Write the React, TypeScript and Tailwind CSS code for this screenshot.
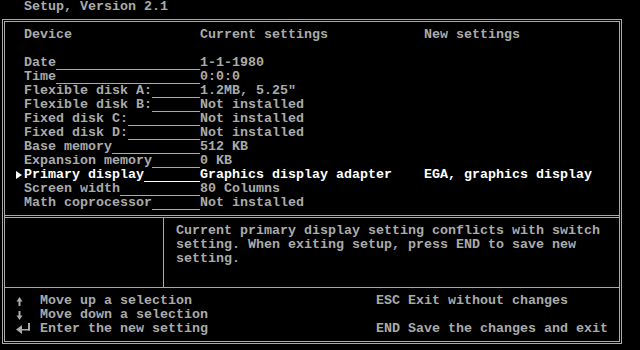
const devices = [
  { name: "Date", current: "1-1-1980" },
  { name: "Time", current: "0:0:0" },
  { name: "Flexible disk A:", current: '1.2MB, 5.25"' },
  { name: "Flexible disk B:", current: "Not installed" },
  { name: "Fixed disk C:", current: "Not installed" },
  { name: "Fixed disk D:", current: "Not installed" },
  { name: "Base memory", current: "512 KB" },
  { name: "Expansion memory", current: "0 KB" },
  { name: "Primary display", current: "Graphics display adapter", next: "EGA, graphics display", selected: true },
  { name: "Screen width", current: "80 Columns" },
  { name: "Math coprocessor", current: "Not installed" },
];

function UpArrow() {
  return (
    <svg width="8" height="14" viewBox="0 0 8 14" className="block">
      <polygon points="0.5,7.5 3.5,3 6.5,7.5" fill="#aaaaaa" />
      <rect x="2.5" y="6" width="2" height="6" fill="#aaaaaa" />
    </svg>
  );
}

function DownArrow() {
  return (
    <svg width="8" height="14" viewBox="0 0 8 14" className="block">
      <rect x="2.5" y="3" width="2" height="6" fill="#aaaaaa" />
      <polygon points="0.5,7.5 3.5,12 6.5,7.5" fill="#aaaaaa" />
    </svg>
  );
}

function EnterArrow() {
  return (
    <svg width="16" height="14" viewBox="0 0 16 14" className="block">
      <polygon points="0,7.5 6,3 6,12" fill="#aaaaaa" />
      <rect x="5" y="7" width="9" height="1.5" fill="#aaaaaa" />
      <rect x="12" y="1" width="2" height="7.5" fill="#aaaaaa" />
    </svg>
  );
}

function App() {
  return (
    <div className="w-[640px] h-[350px] bg-black text-[#aaaaaa] font-['Liberation_Mono','DejaVu_Sans_Mono',monospace] font-bold text-[13.333px] leading-[14px] overflow-hidden">
      <div className="h-[14px] pl-[24px] whitespace-pre">Setup, Version 2.1</div>

      <div className="mt-[5px] ml-[2px] w-[620px] h-[325px] border-[3px] border-double border-[#aaaaaa] flex flex-col">
        {/* device list */}
        <div className="h-[194px] shrink-0 border-b border-[#aaaaaa] pt-[6px] pl-[11px]">
          <div className="flex h-[14px] whitespace-pre">
            <div className="w-[8px]" />
            <div className="w-[176px]">Device</div>
            <div className="w-[224px]">Current settings</div>
            <div>New settings</div>
          </div>
          <div className="h-[14px]" />
          {devices.map((item, index) => (
            <div
              key={index}
              className={`flex h-[14px] whitespace-pre ${item.selected ? "text-white" : ""}`}
            >
              <div className="w-[8px]">
                {item.selected && (
                  <svg width="8" height="14" viewBox="0 0 8 14" className="block">
                    <polygon points="0,3 6,7 0,11" fill="#ffffff" />
                  </svg>
                )}
              </div>
              <div className="w-[176px] flex">
                <span>{item.name}</span>
                <span
                  className={`flex-1 border-b ${item.selected ? "border-white" : "border-[#aaaaaa]"}`}
                />
              </div>
              <div className="w-[224px]">{item.current}</div>
              <div>{item.next}</div>
            </div>
          ))}
        </div>

        {/* message */}
        <div className="mt-[1px] h-[71px] shrink-0 flex border-t border-b border-[#aaaaaa]">
          <div className="w-[159px] border-r border-[#aaaaaa]" />
          <div className="pt-[6px] pl-[12px] whitespace-pre">
            <div>Current primary display setting conflicts with switch</div>
            <div>setting. When exiting setup, press END to save new</div>
            <div>setting.</div>
          </div>
        </div>

        {/* keys */}
        <div className="flex-1 flex pt-[6px] pl-[11px] whitespace-pre">
          <div className="w-[360px]">
            <div className="flex h-[14px]">
              <div className="w-[24px]">
                <UpArrow />
              </div>
              <span>Move up a selection</span>
            </div>
            <div className="flex h-[14px]">
              <div className="w-[24px]">
                <DownArrow />
              </div>
              <span>Move down a selection</span>
            </div>
            <div className="flex h-[14px]">
              <div className="w-[24px]">
                <EnterArrow />
              </div>
              <span>Enter the new setting</span>
            </div>
          </div>
          <div>
            <div className="h-[14px]">ESC Exit without changes</div>
            <div className="h-[14px]" />
            <div className="h-[14px]">END Save the changes and exit</div>
          </div>
        </div>
      </div>
    </div>
  );
}

export default App;
